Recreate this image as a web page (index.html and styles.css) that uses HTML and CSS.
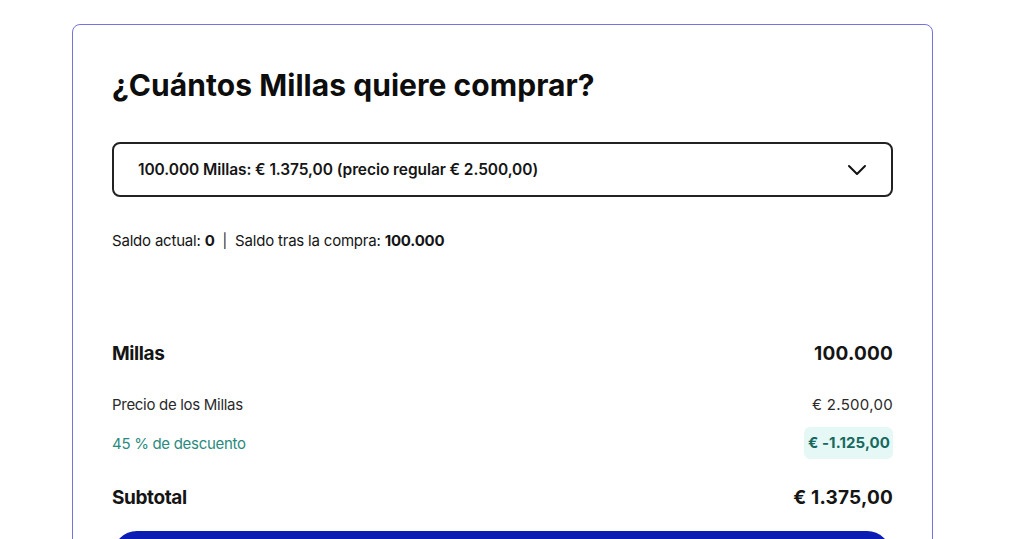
FILE: index.html
```html
<!DOCTYPE html>
<html lang="es">
<head>
<meta charset="utf-8">
<link rel="stylesheet" href="styles.css">
</head>
<body>
<div class="page">
  <section class="card">
    <h1 class="title">¿Cuántos Millas quiere comprar?</h1>
    <div class="select">
      <span class="select-text">100.000 Millas: € 1.375,00 (precio regular € 2.500,00)</span>
      <svg class="chevron" width="20" height="12" viewBox="0 0 20 12"><path d="M2 2 L10 10 L18 2" fill="none" stroke="#111" stroke-width="2" stroke-linecap="round" stroke-linejoin="round"/></svg>
    </div>
    <p class="balance">Saldo actual: <b>0</b> <span class="sep">|</span> Saldo tras la compra: <b>100.000</b></p>
    <div class="summary">
      <div class="row row-main"><span>Millas</span><span class="num">100.000</span></div>
      <div class="row row-sub row-price"><span>Precio de los Millas</span><span class="num">€ 2.500,00</span></div>
      <div class="row row-sub row-discount"><span>45 % de descuento</span><span class="badge num">€ -1.125,00</span></div>
      <div class="row row-main row-total"><span>Subtotal</span><span class="num">€ 1.375,00</span></div>
    </div>
    <button class="cta" aria-label="Comprar"></button>
  </section>
</div>
</body>
</html>
```
FILE: styles.css
```css
* { box-sizing: border-box; }
html, body { margin: 0; padding: 0; background: #fff; }
body { font-family: Inter, "Noto Sans", sans-serif; color: #151515; }
.page { padding: 24px 91px 0 72px; }
.card {
  width: 861px;
  border: 1px solid #7474dc;
  border-radius: 8px;
  padding: 40px 39px 0 39px;
  height: 540px;
  overflow: hidden;
}
.title {
  margin: 0;
  font-size: 30px;
  font-weight: 700;
  letter-spacing: 0.05px;
  line-height: 40px;
  color: #0d0d0d;
}
.select {
  margin-top: 37px;
  height: 55px;
  border: 2px solid #222;
  border-radius: 8px;
  display: flex;
  align-items: center;
  justify-content: space-between;
  padding: 0 24px 0 24px;
}
.select-text { font-size: 15.5px; font-weight: 600; letter-spacing: -0.08px; }
.chevron { display: block; }
.balance { margin: 34px 0 0; font-size: 15px; letter-spacing: -0.2px; line-height: 20px; }
.balance b { font-weight: 700; }
.sep { margin: 0 4px; font-size: 14px; color: #222; }
.summary { margin-top: 89px; display: flex; flex-direction: column; }
.row { display: flex; justify-content: space-between; align-items: center; }
.row-main { font-size: 19px; font-weight: 700; letter-spacing: -0.4px; height: 26px; }
.row-sub { font-size: 15px; letter-spacing: -0.3px; height: 32px; }
.row-main .num { letter-spacing: 0.2px; }
.row-sub .num { letter-spacing: 0.3px; }
.row-price { margin-top: 22px; color: #2a2a2a; }
.row-discount { margin-top: 7px; color: #2a8a7e; }
.badge {
  background: #e6f8f6;
  color: #17695f;
  font-weight: 700;
  border-radius: 6px;
  padding: 6px 3px 6px 4px;
  line-height: 20px;
}
.row-sub .badge { letter-spacing: 0.1px; }
.row-total { margin-top: 25px; }
.cta {
  display: block;
  margin-top: 21px;
  width: 778px;
  margin-left: 1px;
  height: 48px;
  border: none;
  border-radius: 24px;
  background: #0b1db3;
}
```
